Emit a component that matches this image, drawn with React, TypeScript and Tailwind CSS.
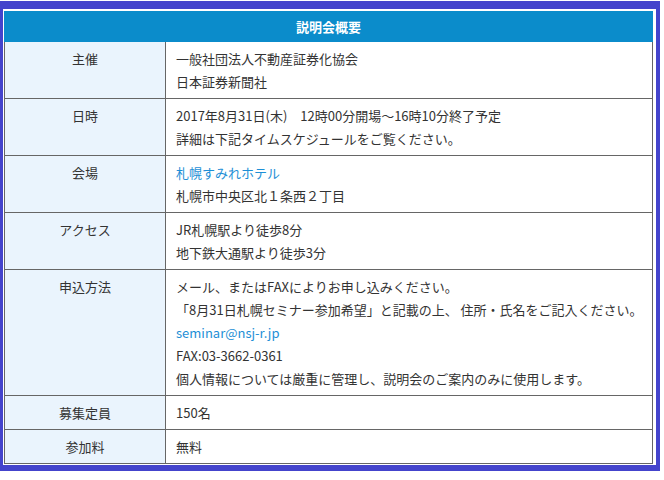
import React from 'react';

type Row = {
  label: string;
  lines: { text: string; link?: boolean }[];
};

const rows: Row[] = [
  {
    label: '主催',
    lines: [{ text: '一般社団法人不動産証券化協会' }, { text: '日本証券新聞社' }],
  },
  {
    label: '日時',
    lines: [
      { text: '2017年8月31日(木)　12時00分開場～16時10分終了予定' },
      { text: '詳細は下記タイムスケジュールをご覧ください。' },
    ],
  },
  {
    label: '会場',
    lines: [{ text: '札幌すみれホテル', link: true }, { text: '札幌市中央区北１条西２丁目' }],
  },
  {
    label: 'アクセス',
    lines: [{ text: 'JR札幌駅より徒歩8分' }, { text: '地下鉄大通駅より徒歩3分' }],
  },
  {
    label: '申込方法',
    lines: [
      { text: 'メール、またはFAXによりお申し込みください。' },
      { text: '「8月31日札幌セミナー参加希望」と記載の上、 住所・氏名をご記入ください。' },
      { text: 'seminar@nsj-r.jp', link: true },
      { text: 'FAX:03-3662-0361' },
      { text: '個人情報については厳重に管理し、説明会のご案内のみに使用します。' },
    ],
  },
  { label: '募集定員', lines: [{ text: '150名' }] },
  { label: '参加料', lines: [{ text: '無料' }] },
];

const App: React.FC = () => {
  return (
    <div
      className="w-[664px] h-[480px] bg-white pt-px text-[13px] leading-[23px] text-[#333]"
      style={{ fontFamily: '"Noto Sans CJK JP", "Noto Sans", sans-serif' }}
    >
      <div className="w-[660px] bg-[#4444cc] pt-[8px] pl-[3px] pr-[4px] pb-[6px]">
        <div className="bg-white pt-[2px] pl-px pr-[3px] pb-px">
          <div className="h-[31px] bg-[#0b8ccb] flex items-center justify-center text-white font-bold">
            説明会概要
          </div>
          {rows.map((row) => (
            <div key={row.label} className="flex border-x border-b border-[#666]">
              <div className="w-[161px] shrink-0 bg-[#eaf4fd] border-r border-[#666] text-center py-[5px]">
                {row.label}
              </div>
              <div className="flex-1 pl-[10px] py-[5px]">
                {row.lines.map((line, i) => (
                  <div key={i} className={line.link ? 'text-[#1e8fd6]' : ''}>
                    {line.text}
                  </div>
                ))}
              </div>
            </div>
          ))}
        </div>
      </div>
    </div>
  );
};

export default App;
